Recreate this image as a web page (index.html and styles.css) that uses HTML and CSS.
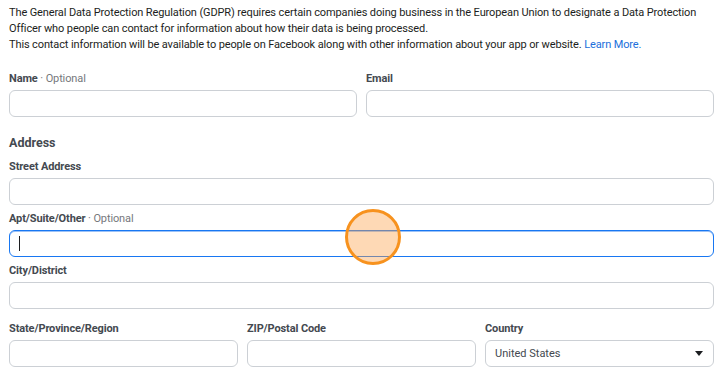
FILE: index.html
```html
<!DOCTYPE html>
<html lang="en">
<head>
<meta charset="UTF-8">
<meta name="viewport" content="width=device-width, initial-scale=1.0">
<title>Data Protection Officer Contact Information</title>
<link rel="stylesheet" href="styles.css">
</head>
<body>

<div class="page">
  <p class="intro">
    The General Data Protection Regulation (GDPR) requires certain companies doing business in the European Union to designate a Data Protection Officer who people can contact for information about how their data is being processed.<br>
    This contact information will be available to people on Facebook along with other information about your app or website. <a href="#" class="link">Learn More.</a>
  </p>

  <form class="dpo-form">
    <div class="row two">
      <div class="field">
        <label for="name">Name <span class="optional">· Optional</span></label>
        <input type="text" id="name" class="text-input">
      </div>
      <div class="field">
        <label for="email">Email</label>
        <input type="text" id="email" class="text-input">
      </div>
    </div>

    <h2 class="section-title">Address</h2>

    <div class="field">
      <label for="street">Street Address</label>
      <input type="text" id="street" class="text-input">
    </div>

    <div class="field">
      <label for="apt">Apt/Suite/Other <span class="optional">· Optional</span></label>
      <div class="input-wrap">
        <input type="text" id="apt" class="text-input focused">
        <span class="caret"></span>
      </div>
    </div>

    <div class="field">
      <label for="city">City/District</label>
      <input type="text" id="city" class="text-input">
    </div>

    <div class="row three">
      <div class="field">
        <label for="state">State/Province/Region</label>
        <input type="text" id="state" class="text-input">
      </div>
      <div class="field">
        <label for="zip">ZIP/Postal Code</label>
        <input type="text" id="zip" class="text-input">
      </div>
      <div class="field">
        <label>Country</label>
        <div class="select-box">
          <span>United States</span>
          <span class="arrow"></span>
        </div>
      </div>
    </div>
  </form>

  <div class="touch"></div>
</div>

</body>
</html>
```

FILE: styles.css
```css
body {
    font-family: Roboto, "Liberation Sans", Arial, sans-serif;
    font-size: 12px;
    color: #1c1e21;
    background-color: #fff;
    margin: 0;
    padding: 0;
}

.page {
    position: relative;
    padding: 5px 6px 0 9px;
}

.intro {
    margin: 0;
    font-size: 11px;
    letter-spacing: -0.12px;
    line-height: 16px;
}

.link {
    color: #216fdb;
    text-decoration: none;
}

.dpo-form {
    margin-top: 18px;
    display: flex;
    flex-direction: column;
    gap: 6px;
}

.row {
    display: grid;
    gap: 9px;
}

.row.two {
    grid-template-columns: 1fr 1fr;
}

.row.three {
    grid-template-columns: 1fr 1fr 1fr;
    margin-top: 6px;
}

.field {
    display: flex;
    flex-direction: column;
    gap: 3px;
}

label {
    font-size: 11px;
    font-weight: bold;
    letter-spacing: -0.12px;
    color: #444950;
    line-height: 16px;
}

.optional {
    font-weight: normal;
    color: #76787c;
}

.section-title {
    margin: 11px 0 1px;
    font-size: 12.5px;
    line-height: 18px;
    color: #444950;
}

.text-input,
.select-box {
    width: 100%;
    height: 27px;
    padding: 0 9px;
    border: 1px solid #ccd0d5;
    border-radius: 6px;
    box-sizing: border-box;
    font-family: inherit;
    font-size: 12px;
    background-color: #fff;
    outline: none;
}

.text-input.focused {
    border-color: #1877f2;
    box-shadow: inset 0 1px 0 #9cc2f7;
}

.input-wrap {
    position: relative;
}

.caret {
    position: absolute;
    left: 10px;
    top: 6px;
    width: 1px;
    height: 15px;
    background-color: #1c1e21;
}

.select-box {
    display: flex;
    align-items: center;
    justify-content: space-between;
    font-size: 11px;
    color: #444950;
    padding: 0 10px 0 9px;
}

.arrow {
    width: 0;
    height: 0;
    border-left: 4px solid transparent;
    border-right: 4px solid transparent;
    border-top: 5px solid #1c1e21;
}

.touch {
    position: absolute;
    left: 345px;
    top: 209px;
    width: 50px;
    height: 50px;
    border: 3px solid #f7921e;
    border-radius: 50%;
    background-color: rgba(253, 160, 70, 0.4);
}
```
